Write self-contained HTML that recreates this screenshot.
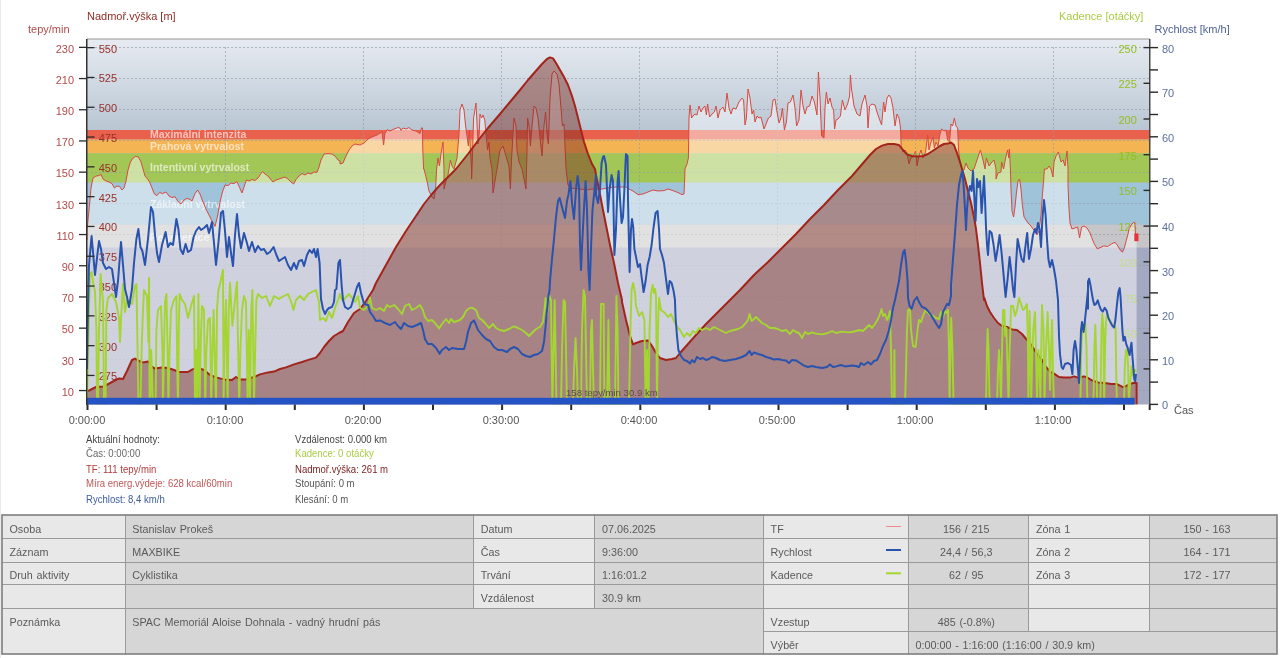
<!DOCTYPE html>
<html lang="cs"><head><meta charset="utf-8"><title>Graf</title>
<style>html,body{margin:0;padding:0;background:#fff;overflow:hidden}body{width:1280px;height:658px;position:relative;font-family:"Liberation Sans",Arial,sans-serif}</style>
</head><body>
<svg width="1280" height="658" viewBox="0 0 1280 658" style="display:block;position:absolute;left:0;top:0;will-change:transform" font-family="Liberation Sans, Arial, sans-serif">
<defs>
<linearGradient id="bg" x1="0" y1="0" x2="0" y2="1">
<stop offset="0" stop-color="#e7ebf1"/>
<stop offset="0.25" stop-color="#b8c6d3"/>
<stop offset="0.57" stop-color="#a4a9c2"/>
<stop offset="1" stop-color="#a4a9c2"/>
</linearGradient>
<clipPath id="zclip"><rect x="87" y="130" width="1063" height="118"/></clipPath>
<clipPath id="plot"><rect x="87" y="39" width="1063" height="365.5"/></clipPath>
</defs>
<rect width="1280" height="658" fill="#fff"/>
<rect x="0" y="0" width="1" height="658" fill="#e9e9e9"/>
<rect x="87" y="39" width="1063" height="365.5" fill="url(#bg)"/>
<rect x="87" y="130" width="1063" height="9.6" fill="#e9604c"/>
<rect x="87" y="139.6" width="1063" height="13.7" fill="#f4b454"/>
<rect x="87" y="153.3" width="1063" height="29.4" fill="#a3c756"/>
<rect x="87" y="182.7" width="1063" height="41.9" fill="#9fc3d9"/>
<rect x="87" y="224.6" width="1063" height="23" fill="#c6c6c8"/>
<g stroke="#8f9aa5" stroke-width="1" stroke-dasharray="2,2" opacity="0.62" shape-rendering="crispEdges">
<line x1="87" y1="47.3" x2="1150" y2="47.3"/>
<line x1="87" y1="78.5" x2="1150" y2="78.5"/>
<line x1="87" y1="109.7" x2="1150" y2="109.7"/>
<line x1="87" y1="140.9" x2="1150" y2="140.9"/>
<line x1="87" y1="172.1" x2="1150" y2="172.1"/>
<line x1="87" y1="203.3" x2="1150" y2="203.3"/>
<line x1="87" y1="234.5" x2="1150" y2="234.5"/>
<line x1="87" y1="265.7" x2="1150" y2="265.7"/>
<line x1="87" y1="296.9" x2="1150" y2="296.9"/>
<line x1="87" y1="328.1" x2="1150" y2="328.1"/>
<line x1="87" y1="359.3" x2="1150" y2="359.3"/>
<line x1="87" y1="390.5" x2="1150" y2="390.5"/>
<line x1="225" y1="47" x2="225" y2="404.5"/>
<line x1="363" y1="47" x2="363" y2="404.5"/>
<line x1="501" y1="47" x2="501" y2="404.5"/>
<line x1="639" y1="47" x2="639" y2="404.5"/>
<line x1="777" y1="47" x2="777" y2="404.5"/>
<line x1="915" y1="47" x2="915" y2="404.5"/>
<line x1="1053" y1="47" x2="1053" y2="404.5"/>
</g>
<g fill="#fff" fill-opacity="0.62" font-size="10.5" font-weight="bold" clip-path="url(#zclip)">
<text x="150" y="137.7">Maximální intenzita</text>
<text x="150" y="149.7">Prahová vytrvalost</text>
<text x="150" y="171.3">Intentivní vytrvalost</text>
<text x="150" y="207.5">Základní vytrvalost</text>
<text x="150" y="240.5">Regenerace</text>
</g>
<g font-size="11" fill="#94bd22" text-anchor="end">
<text x="1136.8" y="52.6">250</text>
<text x="1136.8" y="88.3">225</text>
<text x="1136.8" y="124.0">200</text>
<text x="1136.8" y="159.7">175</text>
<text x="1136.8" y="195.4">150</text>
<text x="1136.8" y="231.1">125</text>
<text x="1136.8" y="266.8">100</text>
<text x="1136.8" y="302.5">75</text>
<text x="1136.8" y="338.2">50</text>
</g>
<g clip-path="url(#plot)">
<path d="M87,240 L87,231 L88,220 L89.6,204 L91,188 L93,178 L96,176 L99,175.6 L101,174.4 L103,179 L106,181 L109,182 L112,183.6 L114.4,188 L117,186 L119.6,186.4 L122,190 L124,188 L126,181 L128,170 L130.4,162 L133,158 L135.6,156.4 L138.4,157 L141,162 L143,169 L145,176 L147.6,179 L149.6,182 L152,188 L154.4,194 L157,195.6 L159.6,192.4 L162.4,193.6 L166,192 L169,196 L172,197.6 L175,196.6 L178,201.6 L181,204 L184,200 L187,198.4 L190,199.4 L192,201 L195,193.6 L197.6,190 L200,194 L203,202 L206,209 L209,215 L212,221 L215,226.4 L217.6,216 L220,202 L222.4,192 L225,185 L228,185.6 L231,183 L234,183.6 L237,181.6 L239.6,187.6 L242,193 L244,187 L246.4,180 L249,181 L252,179.6 L255,180.4 L258,178 L260.4,174.4 L262.6,171.6 L265,174 L268,176 L270.4,179 L273,182 L276,180 L279,179 L282,178 L285,177 L288,179 L291,182 L293.6,184 L296,179.6 L299,176 L302,173.6 L305,175 L308,173 L311,174 L314,172 L317,172.4 L319,167 L321,160 L324,154 L328,153.6 L332,154 L335,156 L338,160 L340,161 L340,164 L343,163 L346,156 L349,150 L352,146 L355,144 L360,145 L364,143 L368,139 L372,137 L377,135 L382,132 L383.6,145 L384.8,134 L387,129.6 L390,131 L394,129 L398,127.6 L400,128 L401,130.4 L403,128 L406,129 L409,127.6 L412,130 L416,131 L420,133.6 L421.6,127.6 L422.4,128 L422.8,150 L423.6,169 L424,169 L427,181 L429,191 L432,197 L434,199 L435.6,189 L436.6,169 L438,158 L439.4,166 L441,154 L443,142 L444,169 L444,189 L446,181 L448,175 L450.4,160 L452,166 L454,169 L457,158 L459,134 L460,110 L462,104 L464,110 L465.6,126 L467,136 L468.4,146 L469.4,130 L470.4,150 L471.6,169 L471.6,179 L472.4,158 L473.6,118 L476,103 L477.2,128 L478,144 L479.2,134 L480,114 L481.6,118 L483,115 L484.8,120 L486,134 L487.6,150 L489,142 L490,158 L492,169 L493,193 L495,181 L497,169 L500,150 L503,146 L506,156 L509,166 L510.4,189 L511.6,158 L513,134 L514,118 L516,126 L517,150 L519,162 L522,169 L526,189 L527,150 L527.6,118 L529,126 L530.4,146 L532,126 L534,106 L536,108 L538,118 L540,138 L542,156 L544,126 L545.6,112 L547,134 L548.4,144 L550,98 L552,74 L554,71 L557,74 L559,84 L561,108 L562.4,126 L564,124 L565.2,150 L566,169 L568,185 L570,188 L580,189 L586,190 L592,189 L602,189 L608,188 L616,187 L626,187 L629,189 L633,191 L638,194.6 L643,194 L648,192 L653,190 L658,191 L664,190.6 L668,189 L673,190.6 L678,192.6 L682,194.6 L684,194 L684.6,181 L685,169 L687,164 L688.4,158 L689,118 L690,105 L691.6,118 L693,116 L695,114 L697,115 L699,106 L701,112 L703,108 L705,106 L706.4,115 L707.6,104 L709.6,117 L712,114 L714.4,112 L716,106 L718,118 L720,110 L723,107 L725,112 L727,93 L729,108 L731,114 L733,108 L736,109 L739,102 L742,98 L743.6,100 L745,125 L746.4,118 L748,89 L750,98 L752,114 L753.6,110 L755,122 L757,116 L759,118 L761,117 L764,129 L766,124 L768.4,118 L771,116 L773,100 L775,99 L777,112 L779,123 L781,118 L782.4,108 L784.4,130 L786.4,122 L788,103 L790.4,102 L793,95 L795,108 L796.6,126 L799,120 L801,90 L803,106 L805,114 L807,107 L809.6,106 L812,96 L814.4,102 L817,115 L818.4,72 L820,98 L821.6,136 L824,138 L825,108 L826.4,92 L828,104 L830,98 L832,107 L833.6,110 L834.6,129 L836,120 L838,119 L840.4,116 L842.4,100 L845,110 L847.6,104 L849.6,96 L850.4,75 L851.6,90 L852,92 L854,106 L857,114 L860,116 L862,104 L865,95 L867,106 L868,128 L869.6,106 L872,104 L875,105 L877,112 L879,118 L881.6,125 L883.6,102 L885,112 L887,98 L889,95 L891,98 L893,108 L895,126 L897,114 L899,118 L900.4,127 L901.2,146 L903,152 L905,150 L907,153 L909,164 L911,158 L913,157 L915.6,151 L917,166 L919,156 L921,150 L923,158 L925.6,152 L927.6,135 L929,150 L931,142 L933,137 L934.4,148 L936,142 L938,146 L940,134 L941.6,129 L944,131 L946,130 L947.6,140 L949.6,142 L951,124 L952.6,126 L954.4,118 L956,126 L957.6,128 L958.6,150 L960,162 L962,169 L964,170 L966,163 L968,168 L971,171 L974,169 L977,160 L980.4,150 L983,160 L985,169 L986.4,158 L989,166 L992,162 L994,160 L996,169 L996,179 L998,173 L1001,172 L1001.6,162 L1003.6,169 L1005.6,158 L1007.6,150 L1008.8,158 L1009.4,149 L1010.4,169 L1011,189 L1012,211 L1013.6,217 L1015,207 L1016.4,193 L1018,181 L1019.6,179 L1021,189 L1022.4,205 L1024,217 L1026,220 L1028,223 L1031,226 L1033,229 L1035,231 L1037,235 L1039,231 L1041,215 L1042.4,195 L1043.6,181 L1044.4,169 L1047,169 L1049,166 L1051,169 L1053,177 L1054,162 L1056,156 L1058.4,152 L1061,162 L1063,160 L1065,166 L1067,151 L1068,169 L1068,185 L1069,209 L1070,223 L1072,229 L1075,228 L1077.6,227 L1079.6,238 L1081.6,227 L1084,226 L1087,228 L1090,233 L1091.6,237.5 L1094.4,244.1 L1097.2,248.8 L1100,247.8 L1103.8,245.9 L1107.5,246.5 L1111.3,244.1 L1115,242.2 L1117.8,245.9 L1120.6,250.6 L1122.5,252.1 L1124.4,247.8 L1126.3,240.3 L1128.1,233.8 L1129.1,228.8 L1131.9,224.1 L1133.8,222.2 L1134.7,222.2 L1135.3,230.6 L1135.6,240 L1136.6,240 L1136.6,404.5 L87,404.5 Z" fill="#fff" fill-opacity="0.47" stroke="none"/>
<path d="M87,240 L87,231 L88,220 L89.6,204 L91,188 L93,178 L96,176 L99,175.6 L101,174.4 L103,179 L106,181 L109,182 L112,183.6 L114.4,188 L117,186 L119.6,186.4 L122,190 L124,188 L126,181 L128,170 L130.4,162 L133,158 L135.6,156.4 L138.4,157 L141,162 L143,169 L145,176 L147.6,179 L149.6,182 L152,188 L154.4,194 L157,195.6 L159.6,192.4 L162.4,193.6 L166,192 L169,196 L172,197.6 L175,196.6 L178,201.6 L181,204 L184,200 L187,198.4 L190,199.4 L192,201 L195,193.6 L197.6,190 L200,194 L203,202 L206,209 L209,215 L212,221 L215,226.4 L217.6,216 L220,202 L222.4,192 L225,185 L228,185.6 L231,183 L234,183.6 L237,181.6 L239.6,187.6 L242,193 L244,187 L246.4,180 L249,181 L252,179.6 L255,180.4 L258,178 L260.4,174.4 L262.6,171.6 L265,174 L268,176 L270.4,179 L273,182 L276,180 L279,179 L282,178 L285,177 L288,179 L291,182 L293.6,184 L296,179.6 L299,176 L302,173.6 L305,175 L308,173 L311,174 L314,172 L317,172.4 L319,167 L321,160 L324,154 L328,153.6 L332,154 L335,156 L338,160 L340,161 L340,164 L343,163 L346,156 L349,150 L352,146 L355,144 L360,145 L364,143 L368,139 L372,137 L377,135 L382,132 L383.6,145 L384.8,134 L387,129.6 L390,131 L394,129 L398,127.6 L400,128 L401,130.4 L403,128 L406,129 L409,127.6 L412,130 L416,131 L420,133.6 L421.6,127.6 L422.4,128 L422.8,150 L423.6,169 L424,169 L427,181 L429,191 L432,197 L434,199 L435.6,189 L436.6,169 L438,158 L439.4,166 L441,154 L443,142 L444,169 L444,189 L446,181 L448,175 L450.4,160 L452,166 L454,169 L457,158 L459,134 L460,110 L462,104 L464,110 L465.6,126 L467,136 L468.4,146 L469.4,130 L470.4,150 L471.6,169 L471.6,179 L472.4,158 L473.6,118 L476,103 L477.2,128 L478,144 L479.2,134 L480,114 L481.6,118 L483,115 L484.8,120 L486,134 L487.6,150 L489,142 L490,158 L492,169 L493,193 L495,181 L497,169 L500,150 L503,146 L506,156 L509,166 L510.4,189 L511.6,158 L513,134 L514,118 L516,126 L517,150 L519,162 L522,169 L526,189 L527,150 L527.6,118 L529,126 L530.4,146 L532,126 L534,106 L536,108 L538,118 L540,138 L542,156 L544,126 L545.6,112 L547,134 L548.4,144 L550,98 L552,74 L554,71 L557,74 L559,84 L561,108 L562.4,126 L564,124 L565.2,150 L566,169 L568,185 L570,188 L580,189 L586,190 L592,189 L602,189 L608,188 L616,187 L626,187 L629,189 L633,191 L638,194.6 L643,194 L648,192 L653,190 L658,191 L664,190.6 L668,189 L673,190.6 L678,192.6 L682,194.6 L684,194 L684.6,181 L685,169 L687,164 L688.4,158 L689,118 L690,105 L691.6,118 L693,116 L695,114 L697,115 L699,106 L701,112 L703,108 L705,106 L706.4,115 L707.6,104 L709.6,117 L712,114 L714.4,112 L716,106 L718,118 L720,110 L723,107 L725,112 L727,93 L729,108 L731,114 L733,108 L736,109 L739,102 L742,98 L743.6,100 L745,125 L746.4,118 L748,89 L750,98 L752,114 L753.6,110 L755,122 L757,116 L759,118 L761,117 L764,129 L766,124 L768.4,118 L771,116 L773,100 L775,99 L777,112 L779,123 L781,118 L782.4,108 L784.4,130 L786.4,122 L788,103 L790.4,102 L793,95 L795,108 L796.6,126 L799,120 L801,90 L803,106 L805,114 L807,107 L809.6,106 L812,96 L814.4,102 L817,115 L818.4,72 L820,98 L821.6,136 L824,138 L825,108 L826.4,92 L828,104 L830,98 L832,107 L833.6,110 L834.6,129 L836,120 L838,119 L840.4,116 L842.4,100 L845,110 L847.6,104 L849.6,96 L850.4,75 L851.6,90 L852,92 L854,106 L857,114 L860,116 L862,104 L865,95 L867,106 L868,128 L869.6,106 L872,104 L875,105 L877,112 L879,118 L881.6,125 L883.6,102 L885,112 L887,98 L889,95 L891,98 L893,108 L895,126 L897,114 L899,118 L900.4,127 L901.2,146 L903,152 L905,150 L907,153 L909,164 L911,158 L913,157 L915.6,151 L917,166 L919,156 L921,150 L923,158 L925.6,152 L927.6,135 L929,150 L931,142 L933,137 L934.4,148 L936,142 L938,146 L940,134 L941.6,129 L944,131 L946,130 L947.6,140 L949.6,142 L951,124 L952.6,126 L954.4,118 L956,126 L957.6,128 L958.6,150 L960,162 L962,169 L964,170 L966,163 L968,168 L971,171 L974,169 L977,160 L980.4,150 L983,160 L985,169 L986.4,158 L989,166 L992,162 L994,160 L996,169 L996,179 L998,173 L1001,172 L1001.6,162 L1003.6,169 L1005.6,158 L1007.6,150 L1008.8,158 L1009.4,149 L1010.4,169 L1011,189 L1012,211 L1013.6,217 L1015,207 L1016.4,193 L1018,181 L1019.6,179 L1021,189 L1022.4,205 L1024,217 L1026,220 L1028,223 L1031,226 L1033,229 L1035,231 L1037,235 L1039,231 L1041,215 L1042.4,195 L1043.6,181 L1044.4,169 L1047,169 L1049,166 L1051,169 L1053,177 L1054,162 L1056,156 L1058.4,152 L1061,162 L1063,160 L1065,166 L1067,151 L1068,169 L1068,185 L1069,209 L1070,223 L1072,229 L1075,228 L1077.6,227 L1079.6,238 L1081.6,227 L1084,226 L1087,228 L1090,233 L1091.6,237.5 L1094.4,244.1 L1097.2,248.8 L1100,247.8 L1103.8,245.9 L1107.5,246.5 L1111.3,244.1 L1115,242.2 L1117.8,245.9 L1120.6,250.6 L1122.5,252.1 L1124.4,247.8 L1126.3,240.3 L1128.1,233.8 L1129.1,228.8 L1131.9,224.1 L1133.8,222.2 L1134.7,222.2 L1135.3,230.6 L1135.6,240 L1136.6,240" fill="none" stroke="#d54a42" stroke-width="1" stroke-linejoin="round"/>
<g font-size="11" fill="#98302a" text-anchor="start">
<text x="98.7" y="52.6">550</text>
<text x="98.7" y="82.4">525</text>
<text x="98.7" y="112.2">500</text>
<text x="98.7" y="142.0">475</text>
<text x="98.7" y="171.8">450</text>
<text x="98.7" y="201.6">425</text>
<text x="98.7" y="231.4">400</text>
<text x="98.7" y="261.2">375</text>
<text x="98.7" y="291.0">350</text>
<text x="98.7" y="320.8">325</text>
<text x="98.7" y="350.6">300</text>
<text x="98.7" y="380.4">275</text>
</g>
<path d="M87,391.6 L92,389 L96,387 L104,386.4 L112,382 L119,378.4 L123,379 L127,371 L132,360 L135,358.6 L139,361 L143,362.4 L148,361.4 L151,366 L155,368.6 L162,367.6 L168,368 L174,370 L179,372 L188,372 L192,369.6 L197,367.6 L204,370 L210,375 L216,377.4 L224,379.4 L232,380 L236,377 L240,379.4 L246,379.4 L254,377 L260,374.4 L268,372.4 L274,371.6 L280,369 L286,367.4 L294,364.4 L302,362 L310,359.4 L316,357.6 L320,353 L324,347 L329,341 L334,336 L339,333 L343,331 L348,322 L354,313 L360,309 L366,301 L373,290 L376,283 L386,265 L396,247 L406,231 L416,216 L424,204 L432,194 L440,185 L448,177 L456,169 L468,154 L480,138 L488,128 L500,114 L510,102 L520,90 L528,80 L535,72 L542,64 L547,59 L550,57.4 L553,58.4 L556,63 L560,70 L564,77 L568,85 L572,96 L575,106 L578,118 L581,130 L584,142 L588,154 L592,164 L595,169 L596,175 L599,189 L602,205 L606,225 L610,245 L614,263 L618,283 L622,300 L622,302 L626,320 L630,336 L633,344.4 L636,343 L642,341 L648,340.4 L652,346 L656,353 L660,358 L666,360 L672,359 L676,358 L680,353 L688,344 L696,335 L706,324 L716,314 L726,304 L740,290 L754,275 L768,262 L782,248 L796,234 L810,219 L824,205 L838,190 L852,176 L858,169 L864,162 L870,155 L876,149 L882,145.6 L888,144 L894,144 L899,145 L903,150 L907,154.4 L912,156 L918,156.4 L923,156 L928,154 L934,150 L940,146 L944,144 L948,143.6 L951,142.4 L954,145 L957,153 L960,162 L962,169 L965,179 L968,191 L971,203 L974,217 L976,229 L978,245 L980,263 L982,283 L984,300 L984.4,298 L987,306 L990,312 L994,318 L998,323 L1002,326 L1007,327 L1012,329.4 L1017,330 L1022,334 L1027,340 L1032,346 L1037,354 L1042,360 L1046,367 L1050,371.6 L1054,373.6 L1059,377 L1064,377.6 L1070,377.6 L1074,376.4 L1078,377.6 L1084,376.4 L1088,378 L1092,380.4 L1098,382.4 L1104,383 L1108,383.6 L1111.3,384.1 L1116.9,384.1 L1120.6,385.9 L1123.4,387.3 L1126.3,385.9 L1130,384.1 L1133.8,382.8 L1136.6,383.1 L1136.6,404.5 L87,404.5 Z" fill="#7e2a20" fill-opacity="0.47" stroke="none"/>
<path d="M87,391.6 L92,389 L96,387 L104,386.4 L112,382 L119,378.4 L123,379 L127,371 L132,360 L135,358.6 L139,361 L143,362.4 L148,361.4 L151,366 L155,368.6 L162,367.6 L168,368 L174,370 L179,372 L188,372 L192,369.6 L197,367.6 L204,370 L210,375 L216,377.4 L224,379.4 L232,380 L236,377 L240,379.4 L246,379.4 L254,377 L260,374.4 L268,372.4 L274,371.6 L280,369 L286,367.4 L294,364.4 L302,362 L310,359.4 L316,357.6 L320,353 L324,347 L329,341 L334,336 L339,333 L343,331 L348,322 L354,313 L360,309 L366,301 L373,290 L376,283 L386,265 L396,247 L406,231 L416,216 L424,204 L432,194 L440,185 L448,177 L456,169 L468,154 L480,138 L488,128 L500,114 L510,102 L520,90 L528,80 L535,72 L542,64 L547,59 L550,57.4 L553,58.4 L556,63 L560,70 L564,77 L568,85 L572,96 L575,106 L578,118 L581,130 L584,142 L588,154 L592,164 L595,169 L596,175 L599,189 L602,205 L606,225 L610,245 L614,263 L618,283 L622,300 L622,302 L626,320 L630,336 L633,344.4 L636,343 L642,341 L648,340.4 L652,346 L656,353 L660,358 L666,360 L672,359 L676,358 L680,353 L688,344 L696,335 L706,324 L716,314 L726,304 L740,290 L754,275 L768,262 L782,248 L796,234 L810,219 L824,205 L838,190 L852,176 L858,169 L864,162 L870,155 L876,149 L882,145.6 L888,144 L894,144 L899,145 L903,150 L907,154.4 L912,156 L918,156.4 L923,156 L928,154 L934,150 L940,146 L944,144 L948,143.6 L951,142.4 L954,145 L957,153 L960,162 L962,169 L965,179 L968,191 L971,203 L974,217 L976,229 L978,245 L980,263 L982,283 L984,300 L984.4,298 L987,306 L990,312 L994,318 L998,323 L1002,326 L1007,327 L1012,329.4 L1017,330 L1022,334 L1027,340 L1032,346 L1037,354 L1042,360 L1046,367 L1050,371.6 L1054,373.6 L1059,377 L1064,377.6 L1070,377.6 L1074,376.4 L1078,377.6 L1084,376.4 L1088,378 L1092,380.4 L1098,382.4 L1104,383 L1108,383.6 L1111.3,384.1 L1116.9,384.1 L1120.6,385.9 L1123.4,387.3 L1126.3,385.9 L1130,384.1 L1133.8,382.8 L1136.6,383.1 L1136.6,404.5" fill="none" stroke="#a3241a" stroke-width="2" stroke-linejoin="round"/>
<path d="M87,404.5 L88,350 L89,310 L90,274 L91.6,272 L93,282 L95,292 L96.4,330 L97,404.5 L98,404.5 L99,330 L100,296 L100.6,274 L102,290 L103,302 L104,404.5 L105.6,404.5 L106.4,310 L108,298 L112,294 L116,302 L119,318 L120,342 L121,320 L123,284 L125,312 L127,300 L132,304 L135,286 L136.4,284 L137.6,350 L138.4,404.5 L140.4,404.5 L141.6,350 L143,310 L144,290 L147,296 L148.4,342 L149,278 L149.6,404.5 L150.4,404.5 L151.2,350 L153,404.5 L155.6,404.5 L156.4,330 L158,310 L161,306 L162.4,350 L163,404.5 L164,350 L165,302 L166.4,294 L167.6,350 L168.4,404.5 L169.6,350 L171,310 L174,300 L176.4,296 L177.2,370 L178,404.5 L178.8,330 L179.6,294 L182,300 L185,304 L188,318 L191,306 L194,296 L195,404.5 L196.4,350 L197.2,404.5 L198.4,294 L199.6,404.5 L200.8,340 L202,306 L204,310 L205.2,404.5 L206.4,350 L208,320 L210,318 L211.2,404.5 L212.4,350 L213.6,310 L215,370 L216,404.5 L217,310 L218.4,290 L220,284 L223,270 L223.6,404.5 L224.8,330 L226,300 L227.6,404.5 L228.8,310 L230,282.6 L232.4,326 L234,310 L236,290 L237,282 L238,342 L239.2,404.5 L240.4,350 L242,310 L244,296 L246,302 L247.6,404.5 L248.8,330 L250,404.5 L251.2,310 L252.4,290 L254,404.5 L255.2,350 L256.4,300 L258,294 L262,298 L266,296 L270,306 L274,296 L279,299 L284,296 L288,294 L292,304 L293.4,310 L296,300 L300,296 L304,300 L308,294 L312,292 L316,290 L319,302 L320,320 L323,318 L326,321 L329,312 L332,318 L335,308 L338,300 L340,294 L340,296 L343,301 L346,297 L349,294 L352,298 L355,302 L358,296 L360,308 L364,310 L368,306 L370,298 L372,308 L376,310 L380,308 L384,311 L387,305 L390,307 L394,305 L398,309 L402,314 L405,306 L409,304 L412,310 L416,308 L420,305 L422.4,309 L425,317 L428,321 L432,320 L435,323 L439,328.4 L442,324 L446,319 L449,323 L451,319 L454,322 L460,320 L463,317 L466,311 L469,308.4 L472,307.6 L476,310 L479,318 L482,320 L485,323 L489,328 L493,324 L496,328 L500,330 L504,331 L509,329 L514,326.4 L518,328 L522,330 L526,333 L529,336 L532,333 L536,329 L540,327 L543,322 L544.4,310 L545.6,298 L547,316 L548,302 L549.6,296 L551,300 L551.6,350 L552.4,404.5 L553.6,350 L554.6,300 L555.6,350 L556.4,404.5 L561,404.5 L562,350 L563.6,300 L565,302 L566,350 L567,404.5 L573,404.5 L574,370 L575.6,338 L577,370 L578,404.5 L581,404.5 L582,330 L583.6,290 L585,296 L586,350 L587,404.5 L590,404.5 L591,330 L592,320 L593,370 L594,404.5 L600,404.5 L601,304 L603.6,304 L604.4,404.5 L607,404.5 L608.4,320 L609.6,404.5 L615,404.5 L616.4,296 L617.6,330 L618.4,404.5 L629,404.5 L630.4,330 L631.6,290 L633,283 L635,292 L636,306 L639,316 L642,312 L644.4,320 L645.6,404.5 L647,350 L648.4,404.5 L649.6,330 L651,294 L652.6,285 L654,293 L655,289 L656,296 L657,404.5 L658,330 L659,298 L661,310 L665,313 L668,317 L671,314 L674,321 L677,327 L680,330 L684,337 L687,333 L690,336 L693,331 L696,333 L699,328 L702,330 L706,328 L710,330 L714,327 L718,329 L722,331 L726,333 L730,331 L734,330 L738,329 L742,327 L745,324 L748,320 L749.6,314 L751.6,321 L754,319 L756,317 L759,320 L762,323 L766,325 L770,328 L774,328 L778,329 L782,331 L786,330 L790,334 L793,330 L796,332 L799,333 L802,338 L805,332 L808,334 L812,332.4 L816,333.6 L822,334.4 L828,333 L832,331 L836,333 L842,331.6 L848,332.4 L852,332 L856,331 L860,330 L863,331 L866,328 L869,325 L872,328 L875,324 L878,319 L880,314 L881.6,309 L883,316 L885,314 L887,320 L888.6,316 L890,311 L891,350 L892,404.5 L894,404.5 L894.4,350 L894.8,404.5 L905,404.5 L906,370 L907,330 L908,310 L910,309 L911,330 L913,346 L915.6,347 L917.6,330 L919,320 L921,322 L923,316 L925,311 L927.6,312 L930,315 L933,316 L936,318 L939,319 L941,312 L943,317 L945,311 L947,313 L948,310 L949,350 L949.6,404.5 L950.4,350 L951.2,318 L952.4,350 L953.6,404.5 L986,404.5 L987,350 L987.6,329 L988.6,350 L989.6,404.5 L997,404.5 L998,370 L999,350 L1000,370 L1001,404.5 L1002,350 L1003,310 L1004.4,310 L1005.2,336 L1006.4,328 L1007.6,370 L1008.6,404.5 L1009.6,350 L1010.4,330 L1011,306 L1013,306 L1015,316 L1017,310 L1019,298 L1021,304 L1023,310 L1025,308 L1027,304 L1028,350 L1028.4,404.5 L1029.2,350 L1029.6,311 L1030.4,350 L1031.2,404.5 L1032.4,350 L1033.6,326 L1035,312 L1036,350 L1037,404.5 L1038.4,350 L1039.6,370 L1040.4,404.5 L1041.2,350 L1042,305 L1043.6,330 L1044.4,404.5 L1046,350 L1047.6,312 L1049,350 L1050,390 L1051,350 L1052,320 L1053,370 L1054,404.5 L1080.3,404.5 L1081.3,347.5 L1082.2,330.6 L1084.1,325 L1085.4,323.1 L1086.5,347.5 L1087.3,404.5 L1093.4,404.5 L1094.4,347.5 L1095.3,325 L1096.3,356.9 L1097.2,404.5 L1100.4,404.5 L1101.5,328.8 L1102.3,313.8 L1103.4,328.8 L1104.1,404.5 L1105.3,338.1 L1106,321.3 L1107.1,313.8 L1108.4,317.5 L1109.8,320.3 L1111.3,323.1 L1113.1,325.9 L1114.6,325 L1115.6,328.8 L1116.1,366.3 L1116.9,404.5 L1124,404.5 L1124.8,366.3 L1125.9,350.3 L1127.2,349.4 L1128.1,366.3 L1128.9,404.5 L1130,385 L1131.5,366.3 L1132.8,375.6 L1133.8,371.9 L1135.3,370 L1136,371.9" fill="none" stroke="#a4d531" stroke-width="1.9" stroke-linejoin="round"/>
<path d="M87,369 L87.6,329 L88.4,289 L89,265 L91.6,236 L95,275 L99,241 L101,249 L103,263 L106,269 L109,267 L112,269 L114,283 L116,297 L118,281 L121,242 L123,265 L125,289 L127,297 L129,307 L130.4,299 L132,289 L134,263 L136.4,239 L138.4,229 L140.4,247 L142.4,251 L145,265 L148,239 L151,207 L153,212 L155,235 L157,253 L159,262 L162,245 L165.6,232 L168,247 L170.4,243 L173,245 L176.4,219 L178.4,229 L180.4,249 L183,254 L185.6,244 L188,252 L191,250 L193.6,237 L196,231 L199,227 L201,230 L204,228 L207,225 L209,233 L212,222 L214,243 L216,265 L218.4,243 L221,213 L223,211 L225,231 L227,257 L229,237 L231,253 L233,266 L235,235 L237,214 L239,235 L241,248 L244,233 L246.4,241 L249,251 L252,242 L255,252 L258,246 L261,250 L264,249 L267,254 L270,252 L273.6,247 L276.4,255 L279,261 L282,259 L285,257 L288,265 L291,270 L294,263 L296.4,269 L299,261 L302,260 L304,266 L307,255 L309.6,250 L312,253 L314,249 L316,257 L317.6,249 L319.6,263 L321,299 L321.6,302 L323,309 L325,314 L327,310 L329,308 L332,307 L334,302 L335,290 L336.4,289 L338.4,263 L340,260 L341.6,285 L343,300 L345,307 L348,309 L351,307 L354,297 L357,287 L359,283 L361,293 L363,300 L364,304 L368,305 L370,312 L373,316 L376,321 L380,320.4 L385,323 L390,325 L395,322 L398,326 L401,329 L404,323 L408,326 L412,327 L417,325 L421,323 L423,330 L425,339 L428,344 L432,344 L436,348 L439.6,353.6 L442,350 L446,347 L449,350 L452,348 L458,349 L464,349 L466,342 L468,332 L471,323 L474,320.4 L476,325 L478,330 L482,335 L486,339 L490,341 L494,347 L498,350 L502,350 L507,352 L510,349 L514,347 L518,349 L522,354 L526,356 L530,357 L534,355 L538,354 L542,351 L544,342 L545.6,326 L547,310 L548.4,296 L549.6,290 L550,281 L552,259 L554,239 L556,217 L558,201 L559.6,198 L562,207 L565,218 L567,201 L568.4,195 L570.4,181 L572,203 L574,219 L576,189 L577.6,176 L579,187 L580,245 L581,270 L583,227 L584.4,201 L585.6,181 L587,209 L588.4,269 L589.6,290 L591,249 L592.4,211 L594,195 L596,175 L596,195 L598,203 L600,189 L601.6,163 L603,157 L604,156 L606,165 L607,189 L608,212 L609.6,189 L611.6,175 L613,181 L614.4,255 L616,229 L617.6,181 L618.6,171 L620,199 L621.6,223 L623,217 L624.4,189 L625.6,161 L626,154 L627.6,156 L628,199 L629.6,272 L631,229 L632,219 L633.2,227 L634.4,249 L636,257 L638,267 L640,264 L641.6,277 L643.6,292 L645.6,281 L647.6,265 L649.6,257 L651.6,245 L653.6,227 L655.6,213 L657.6,211 L659,229 L660,249 L662,255 L664,263 L666,279 L668,294 L669.6,281 L671.6,283 L673.6,291 L675,300 L675,302 L675.6,318 L677,336 L678.4,350 L681,356 L684,360 L687,361 L690,363.6 L692,360 L694.4,362.4 L697,357 L700,359 L703,358 L706,360 L709,359 L712,357 L716,358 L720,360 L725,361 L730,360 L736,359 L742,357 L746,355 L749.6,351 L751.6,355 L754,352.4 L758,354 L762,355 L766,357 L770,358 L774,359.6 L778,359 L782,360 L786,360.4 L789,363 L792,360 L796,360.4 L800,363 L804,365.6 L808,367 L812,366 L816,367 L822,368 L827,367 L830,364.4 L833,367 L836,366.4 L841,365 L845,366.4 L852,365.6 L856,366 L859,367 L861,363 L864,365 L868,362 L871,364.4 L874,361 L877,360 L880,354 L883,346 L886,340 L889,330 L891,320 L893,308 L895,300 L899,281 L901,265 L903,253 L904.6,250 L906,261 L907.6,281 L908,298 L909.6,306 L911.6,309 L914,301 L917,297 L919,302 L922,307 L925,308 L928,311 L931,315 L934,320 L937,325 L939,328 L941,324 L943,312 L945,308 L947,304 L949,305 L951,296 L951,285 L953,259 L955,233 L957,205 L959,185 L961,175 L962.4,171 L963.6,185 L965,209 L966,230 L967,209 L968.4,193 L970,186 L971.6,191 L973,171 L974.4,199 L975.6,221 L977,179 L978.4,187 L980,181 L981.6,213 L983,193 L984,176 L985,199 L986,227 L987,245 L988,255 L989.6,231 L991.6,233 L993.6,245 L995.6,261 L997.6,249 L999.6,235 L1001.6,253 L1003.6,275 L1005.6,297 L1007.6,279 L1009.6,257 L1011,269 L1013,289 L1014.4,297 L1016,265 L1017.6,239 L1019.6,249 L1021.6,259 L1023.6,262 L1025.6,245 L1027.2,233 L1029,259 L1031,249 L1033,235 L1035,229 L1036.4,233 L1038,223 L1039.6,229 L1041,247 L1042.4,219 L1044,200 L1045.6,215 L1047,239 L1048.4,259 L1050,267 L1052,260 L1054,269 L1056,281 L1058,300 L1059,336 L1060,354 L1061.6,367 L1063,369 L1065,364 L1068,363 L1071,365 L1072.4,374 L1073.6,350 L1075,341 L1076.4,350 L1078,370 L1079,383 L1080,360 L1081,330 L1082,322 L1083.6,332 L1085,320 L1086.4,306 L1088,290 L1088,308.8 L1088,291.9 L1088,281.6 L1089.1,278.8 L1090.3,284.4 L1091.6,291.9 L1092.9,299.4 L1094.4,305 L1095.9,304.1 L1097.8,300.3 L1099.1,305 L1100.9,309.7 L1102.8,311.6 L1104.7,307.8 L1106.6,310.6 L1108.4,318.1 L1110.3,321.9 L1112.2,325.6 L1114.1,327.5 L1115.4,320 L1116.9,305 L1118.4,291.9 L1119.7,288.1 L1120.6,297.5 L1121.6,316.3 L1122.5,331.3 L1123.4,340.6 L1124.8,336.9 L1126.3,344.4 L1127.8,348.1 L1128.1,349.4 L1129.6,355 L1130.6,347.5 L1131.5,342.8 L1132.3,355 L1133.4,368.1 L1134.3,379.4 L1135.3,381.3 L1136,373.8" fill="none" stroke="#2a53ae" stroke-width="2" stroke-linejoin="round"/>
</g>
<text x="566" y="395.5" font-size="9.6" fill="#5a4a4a">158 tepy/min 30.9 km</text>
<rect x="1134.3" y="233.4" width="4.2" height="7.8" fill="#e8333a"/>
<rect x="87" y="397.8" width="1047.7" height="6.7" fill="#2353c4"/>
<rect x="87" y="38.2" width="1063" height="1.7" fill="#bdbdbd"/>
<rect x="86" y="39" width="1.5" height="366" fill="#333"/>
<rect x="1149" y="39" width="1.5" height="366" fill="#484848"/>
<g fill="#2b2b2b">
<rect x="79" y="46.7" width="8" height="1.3"/>
<rect x="79" y="77.9" width="8" height="1.3"/>
<rect x="79" y="109.1" width="8" height="1.3"/>
<rect x="79" y="140.3" width="8" height="1.3"/>
<rect x="79" y="171.5" width="8" height="1.3"/>
<rect x="79" y="202.7" width="8" height="1.3"/>
<rect x="79" y="233.9" width="8" height="1.3"/>
<rect x="79" y="265.1" width="8" height="1.3"/>
<rect x="79" y="296.3" width="8" height="1.3"/>
<rect x="79" y="327.5" width="8" height="1.3"/>
<rect x="79" y="358.7" width="8" height="1.3"/>
<rect x="79" y="389.9" width="8" height="1.3"/>
<rect x="87" y="47.0" width="7.5" height="1.3"/>
<rect x="87" y="76.8" width="7.5" height="1.3"/>
<rect x="87" y="106.6" width="7.5" height="1.3"/>
<rect x="87" y="136.4" width="7.5" height="1.3"/>
<rect x="87" y="166.2" width="7.5" height="1.3"/>
<rect x="87" y="196.0" width="7.5" height="1.3"/>
<rect x="87" y="225.8" width="7.5" height="1.3"/>
<rect x="87" y="255.6" width="7.5" height="1.3"/>
<rect x="87" y="285.4" width="7.5" height="1.3"/>
<rect x="87" y="315.2" width="7.5" height="1.3"/>
<rect x="87" y="345.0" width="7.5" height="1.3"/>
<rect x="87" y="374.8" width="7.5" height="1.3"/>
<rect x="1150" y="46.9" width="8" height="1.4"/>
<rect x="1150" y="69.2" width="8" height="1.4"/>
<rect x="1150" y="91.5" width="8" height="1.4"/>
<rect x="1150" y="113.8" width="8" height="1.4"/>
<rect x="1150" y="136.1" width="8" height="1.4"/>
<rect x="1150" y="158.4" width="8" height="1.4"/>
<rect x="1150" y="180.7" width="8" height="1.4"/>
<rect x="1150" y="203.0" width="8" height="1.4"/>
<rect x="1150" y="225.3" width="8" height="1.4"/>
<rect x="1150" y="247.6" width="8" height="1.4"/>
<rect x="1150" y="269.9" width="8" height="1.4"/>
<rect x="1150" y="292.2" width="8" height="1.4"/>
<rect x="1150" y="314.5" width="8" height="1.4"/>
<rect x="1150" y="336.8" width="8" height="1.4"/>
<rect x="1150" y="359.1" width="8" height="1.4"/>
<rect x="1150" y="381.4" width="8" height="1.4"/>
<rect x="1150" y="403.7" width="8" height="1.4"/>
<rect x="1143.5" y="46.9" width="6.5" height="1.4"/>
<rect x="1143.5" y="82.6" width="6.5" height="1.4"/>
<rect x="1143.5" y="118.3" width="6.5" height="1.4"/>
<rect x="1143.5" y="154.0" width="6.5" height="1.4"/>
<rect x="1143.5" y="189.7" width="6.5" height="1.4"/>
<rect x="1143.5" y="225.4" width="6.5" height="1.4"/>
<rect x="1143.5" y="261.1" width="6.5" height="1.4"/>
<rect x="1143.5" y="296.8" width="6.5" height="1.4"/>
<rect x="1143.5" y="332.5" width="6.5" height="1.4"/>
<rect x="1143.5" y="368.2" width="6.5" height="1.4"/>
<rect x="86.5" y="404.5" width="2" height="5.5"/>
<rect x="155.6" y="404.5" width="2" height="5.5"/>
<rect x="224.7" y="404.5" width="2" height="5.5"/>
<rect x="293.8" y="404.5" width="2" height="5.5"/>
<rect x="362.9" y="404.5" width="2" height="5.5"/>
<rect x="432.0" y="404.5" width="2" height="5.5"/>
<rect x="501.1" y="404.5" width="2" height="5.5"/>
<rect x="570.2" y="404.5" width="2" height="5.5"/>
<rect x="639.3" y="404.5" width="2" height="5.5"/>
<rect x="708.4" y="404.5" width="2" height="5.5"/>
<rect x="777.5" y="404.5" width="2" height="5.5"/>
<rect x="846.6" y="404.5" width="2" height="5.5"/>
<rect x="915.7" y="404.5" width="2" height="5.5"/>
<rect x="984.8" y="404.5" width="2" height="5.5"/>
<rect x="1053.9" y="404.5" width="2" height="5.5"/>
<rect x="1123.0" y="404.5" width="2" height="5.5"/>
<rect x="1148.7" y="404.5" width="2" height="5.5"/>
</g>
<g font-size="11" fill="#b24a4a" text-anchor="end">
<text x="74" y="52.5">230</text>
<text x="74" y="83.7">210</text>
<text x="74" y="114.9">190</text>
<text x="74" y="146.1">170</text>
<text x="74" y="177.3">150</text>
<text x="74" y="208.5">130</text>
<text x="74" y="239.7">110</text>
<text x="74" y="270.9">90</text>
<text x="74" y="302.1">70</text>
<text x="74" y="333.3">50</text>
<text x="74" y="364.5">30</text>
<text x="74" y="395.7">10</text>
</g>
<g font-size="11" fill="#5c6f9c" text-anchor="start">
<text x="1162" y="52.6">80</text>
<text x="1162" y="97.2">70</text>
<text x="1162" y="141.8">60</text>
<text x="1162" y="186.4">50</text>
<text x="1162" y="231.0">40</text>
<text x="1162" y="275.6">30</text>
<text x="1162" y="320.2">20</text>
<text x="1162" y="364.8">10</text>
<text x="1162" y="409.4">0</text>
</g>
<g font-size="11" fill="#555" text-anchor="middle">
<text x="87" y="424">0:00:00</text>
<text x="225" y="424">0:10:00</text>
<text x="363" y="424">0:20:00</text>
<text x="501" y="424">0:30:00</text>
<text x="639" y="424">0:40:00</text>
<text x="777" y="424">0:50:00</text>
<text x="915" y="424">1:00:00</text>
<text x="1053" y="424">1:10:00</text>
</g>
<text x="87" y="20" font-size="11" fill="#8f2d25">Nadmoř.výška [m]</text>
<text x="28" y="33" font-size="11" fill="#b24a4a">tepy/min</text>
<text x="1059" y="20" font-size="11" fill="#a9cc44">Kadence [otáčky]</text>
<text x="1154.5" y="33" font-size="11" fill="#4d6194">Rychlost [km/h]</text>
<text x="1174" y="414" font-size="11" fill="#555">Čas</text>
<g font-size="10.3">
<text transform="translate(86,442.8) scale(0.93,1)" fill="#444">Aktuální hodnoty:</text>
<text transform="translate(86,457.3) scale(0.93,1)" fill="#666">Čas: 0:00:00</text>
<text transform="translate(86,472.8) scale(0.93,1)" fill="#b23a3a">TF: 111 tepy/min</text>
<text transform="translate(86,487.3) scale(0.93,1)" fill="#c25656">Míra energ.výdeje: 628 kcal/60min</text>
<text transform="translate(86,502.8) scale(0.93,1)" fill="#3d5c9c">Rychlost: 8,4 km/h</text>
<text transform="translate(295,442.8) scale(0.93,1)" fill="#444">Vzdálenost: 0.000 km</text>
<text transform="translate(295,457.3) scale(0.93,1)" fill="#a9cc44">Kadence: 0 otáčky</text>
<text transform="translate(295,472.8) scale(0.93,1)" fill="#7c2424">Nadmoř.výška: 261 m</text>
<text transform="translate(295,487.3) scale(0.93,1)" fill="#555">Stoupání: 0 m</text>
<text transform="translate(295,502.8) scale(0.93,1)" fill="#555">Klesání: 0 m</text>
</g>
<rect x="2" y="515" width="1275" height="139" fill="#e8e8e8"/>
<rect x="125.3" y="515" width="348.2" height="93" fill="#d6d6d6"/>
<rect x="594.2" y="515" width="169.1" height="93" fill="#d6d6d6"/>
<rect x="125.3" y="608" width="638" height="46" fill="#d6d6d6"/>
<rect x="908.3" y="515" width="120.2" height="116" fill="#d6d6d6"/>
<rect x="1149.3" y="515" width="127.7" height="116" fill="#d6d6d6"/>
<rect x="908.3" y="631" width="368.7" height="23" fill="#d6d6d6"/>
<g stroke="#9a9a9a" stroke-width="1" shape-rendering="crispEdges">
<line x1="2" y1="538.5" x2="1277" y2="538.5"/>
<line x1="2" y1="562" x2="1277" y2="562"/>
<line x1="2" y1="584.5" x2="1277" y2="584.5"/>
<line x1="2" y1="608" x2="1277" y2="608"/>
<line x1="763.3" y1="631" x2="1277" y2="631"/>
<line x1="125.3" y1="515" x2="125.3" y2="654"/>
<line x1="473.5" y1="515" x2="473.5" y2="608"/>
<line x1="594.2" y1="515" x2="594.2" y2="608"/>
<line x1="763.3" y1="515" x2="763.3" y2="654"/>
<line x1="908.3" y1="515" x2="908.3" y2="654"/>
<line x1="1028.5" y1="515" x2="1028.5" y2="631"/>
<line x1="1149.3" y1="515" x2="1149.3" y2="631"/>
</g>
<rect x="2" y="515" width="1275" height="139" fill="none" stroke="#7d7d7d" stroke-width="1.6"/>
<g font-size="10.75" fill="#5a5a5a" word-spacing="0.8">
<text x="9.5" y="532.5">Osoba</text>
<text x="9.5" y="556">Záznam</text>
<text x="9.5" y="579">Druh aktivity</text>
<text x="9.5" y="625.5">Poznámka</text>
<text x="132.3" y="532.5">Stanislav Prokeš</text>
<text x="132.3" y="556">MAXBIKE</text>
<text x="132.3" y="579">Cyklistika</text>
<text x="132.3" y="625.5">SPAC Memoriál Aloise Dohnala - vadný hrudní pás</text>
<text x="480.7" y="532.5">Datum</text>
<text x="480.7" y="556">Čas</text>
<text x="480.7" y="579">Trvání</text>
<text x="480.7" y="602">Vzdálenost</text>
<text x="602" y="532.5">07.06.2025</text>
<text x="602" y="556">9:36:00</text>
<text x="602" y="579">1:16:01.2</text>
<text x="602" y="602">30.9 km</text>
<text x="770.6" y="532.5">TF</text>
<text x="770.6" y="556">Rychlost</text>
<text x="770.6" y="579">Kadence</text>
<text x="770.6" y="625.5">Vzestup</text>
<text x="770.6" y="648.5">Výběr</text>
<text x="966.3" y="532.5" text-anchor="middle">156 / 215</text>
<text x="966.3" y="556" text-anchor="middle">24,4 / 56,3</text>
<text x="966.3" y="579" text-anchor="middle">62 / 95</text>
<text x="966.3" y="625.5" text-anchor="middle">485 (-0.8%)</text>
<text x="915.5" y="648.5">0:00:00 - 1:16:00 (1:16:00 / 30.9 km)</text>
<text x="1036" y="532.5">Zóna 1</text>
<text x="1036" y="556">Zóna 2</text>
<text x="1036" y="579">Zóna 3</text>
<text x="1207" y="532.5" text-anchor="middle">150 - 163</text>
<text x="1207" y="556" text-anchor="middle">164 - 171</text>
<text x="1207" y="579" text-anchor="middle">172 - 177</text>
</g>
<rect x="886" y="526" width="15" height="1" fill="#ee8a8a"/>
<rect x="886" y="549" width="15" height="2" fill="#2a53ae"/>
<rect x="886" y="572.3" width="15" height="2" fill="#a4d531"/>
</svg>
</body></html>
